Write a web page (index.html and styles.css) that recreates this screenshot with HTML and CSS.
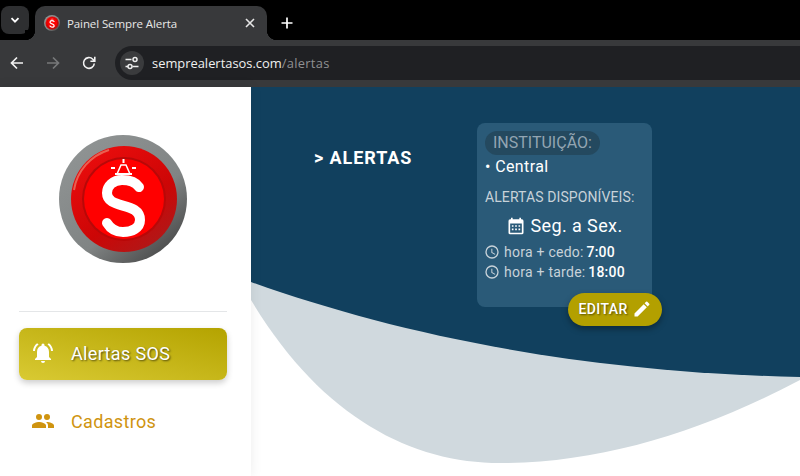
FILE: index.html
```html
<!DOCTYPE html>
<html lang="pt-BR">
<head>
    <meta charset="UTF-8" />
    <title>Painel Sempre Alerta</title>
    <link rel="stylesheet" href="styles.css">
</head>
<body>
<svg class="defs" width="0" height="0" aria-hidden="true">
  <defs>
    <linearGradient id="ringGrad" x1="0.15" y1="0.1" x2="0.85" y2="0.95">
      <stop offset="0" stop-color="#8f9393"/>
      <stop offset="0.6" stop-color="#808484"/>
      <stop offset="1" stop-color="#484848"/>
    </linearGradient>
    <linearGradient id="rimGrad" x1="0.2" y1="0.1" x2="0.8" y2="0.95">
      <stop offset="0" stop-color="#e80c0c"/>
      <stop offset="0.6" stop-color="#cc0606"/>
      <stop offset="1" stop-color="#b01818"/>
    </linearGradient>
    <symbol id="logo" viewBox="0 0 128 128">
      <circle cx="64" cy="64" r="64" fill="url(#ringGrad)"/>
      <circle cx="65" cy="64" r="53" fill="url(#rimGrad)"/>
      <path d="M15 55 A50 50 0 0 1 50 15" fill="none" stroke="#eb9a80" stroke-width="2" opacity=".6"/>
      <circle cx="65" cy="64" r="42" fill="#b80808"/>
      <circle cx="65" cy="64" r="40" fill="#ff0000"/>
      <path d="M80 52C76 46 70 45 63 45C54 45 48 51 48 58C48 75 81 66 81 85C81 93 73 97 64 97C56 97 51 93 48 88" fill="none" stroke="#fff" stroke-width="10" stroke-linecap="round"/>
      <path d="M58 39 L62 30 H67 L71 39 Z" fill="none" stroke="#fff" stroke-width="1.500"/>
      <path d="M56 39 H73" stroke="#fff" stroke-width="2"/>
      <path d="M64.500 24 V28 M52 33 H56 M73 33 H77" stroke="#fff" stroke-width="2"/>
    </symbol>
    <symbol id="clock" viewBox="0 0 24 24">
      <path fill="currentColor" d="M12 2a10 10 0 1 0 0 20 10 10 0 0 0 0-20zm0 18a8 8 0 1 1 0-16 8 8 0 0 1 0 16zm.5-13H11v6l5.2 3.2.8-1.2-4.5-2.7V7z"/>
    </symbol>
  </defs>
</svg>

<!-- barra do navegador -->
<div class="tabstrip">
  <div class="tab-menu">
    <svg width="12" height="12" viewBox="0 0 12 12"><path d="M2.500 4.200 6 7.700l3.500-3.500" fill="none" stroke="#fff" stroke-width="1.800"/></svg>
  </div>
  <div class="tab">
    <svg class="favicon" width="16" height="16"><use href="#logo"/></svg>
    <span class="tab-title">Painel Sempre Alerta</span>
    <svg width="10" height="10" viewBox="0 0 10 10"><path d="M1 1l8 8M9 1l-8 8" stroke="#e6e6e6" stroke-width="1.600"/></svg>
  </div>
  <svg class="new-tab" width="12" height="12" viewBox="0 0 12 12"><path d="M6 .5v11M.5 6h11" stroke="#fff" stroke-width="1.700"/></svg>
</div>
<div class="toolbar">
  <svg class="nav-icon" width="16" height="16" viewBox="0 0 16 16"><path d="M14 8H3M8 2.500 2.500 8 8 13.500" fill="none" stroke="#f2f2f2" stroke-width="1.700"/></svg>
  <svg class="nav-icon" width="16" height="16" viewBox="0 0 16 16"><path d="M2 8h11M8 2.500 13.500 8 8 13.500" fill="none" stroke="#77787a" stroke-width="1.700"/></svg>
  <svg class="nav-icon" width="16" height="16" viewBox="0 0 16 16"><path d="M13.300 8.500A5.400 5.400 0 1 1 11.800 4.200L13.600 6M13.800 1.800V6.200H9.400" fill="none" stroke="#f2f2f2" stroke-width="1.600"/></svg>
  <div class="omnibox">
    <span class="site-info">
      <svg width="16" height="16" viewBox="0 0 16 16"><path d="M1.500 4.500h6M1.500 11.500h2.500M8.500 11.500h6" stroke="#eee" stroke-width="1.500"/><circle cx="11" cy="4.500" r="2" fill="none" stroke="#eee" stroke-width="1.500"/><circle cx="6" cy="11.500" r="2" fill="none" stroke="#eee" stroke-width="1.500"/></svg>
    </span>
    <span class="url">semprealertasos.com<span class="url-path">/alertas</span></span>
  </div>
</div>

<div class="app">
  <aside class="sidebar">
    <div class="logo-box">
      <svg width="128" height="128"><use href="#logo"/></svg>
    </div>
    <hr class="divider">
    <nav class="menu">
      <a class="menu-item active" href="#">
        <svg width="24" height="24" viewBox="0 0 24 24"><path fill="#fff" d="M12 22a2 2 0 0 0 2-2h-4a2 2 0 0 0 2 2zm6-6v-5c0-3.100-1.600-5.600-4.500-6.300V4a1.500 1.500 0 0 0-3 0v.7C7.600 5.400 6 7.900 6 11v5l-2 2v1h16v-1l-2-2zM7.600 3.600 6.100 2.200A10.400 10.400 0 0 0 2 10h2a8.400 8.400 0 0 1 3.600-6.400zM20 10h2a10.500 10.500 0 0 0-4.100-7.800l-1.400 1.400A8.500 8.500 0 0 1 20 10z"/></svg>
        <span>Alertas SOS</span>
      </a>
      <a class="menu-item" href="#">
        <svg width="24" height="24" viewBox="0 0 24 24"><path fill="#cf9410" d="M16 11a3 3 0 1 0 0-6 3 3 0 0 0 0 6zm-8 0a3 3 0 1 0 0-6 3 3 0 0 0 0 6zm0 2c-2.300 0-7 1.200-7 3.500V19h14v-2.500C15 14.200 10.300 13 8 13zm8 0h-1c1.200.8 2 2 2 3.500V19h6v-2.500c0-2.300-4.700-3.500-7-3.500z"/></svg>
        <span>Cadastros</span>
      </a>
    </nav>
  </aside>

  <main class="content">
    <svg class="waves" width="549" height="389" viewBox="0 0 549 389">
      <path fill="#d0d9de" d="M0 190V213C70 330 160 376 249 376C350 376 450 345 549 293V190Z"/>
      <path fill="#11405e" d="M0 0H549V290C320 285 140 245 0 195Z"/>
    </svg>
    <h2 class="page-title">&gt; ALERTAS</h2>
    <section class="card">
      <span class="pill">INSTITUIÇÃO:</span>
      <p class="inst-name">• Central</p>
      <p class="card-label">ALERTAS DISPONÍVEIS:</p>
      <p class="days">
        <svg width="20" height="20" viewBox="0 0 24 24"><path fill="#fff" d="M19 4h-1V2h-2v2H8V2H6v2H5a2 2 0 0 0-2 2v14a2 2 0 0 0 2 2h14a2 2 0 0 0 2-2V6a2 2 0 0 0-2-2zm0 16H5V9h14v11zM7 11h2v2H7zm4 0h2v2h-2zm4 0h2v2h-2zm-8 4h2v2H7zm4 0h2v2h-2zm4 0h2v2h-2z"/></svg>
        Seg. a Sex.
      </p>
      <p class="hour"><svg width="16" height="16"><use href="#clock"/></svg>hora + cedo: <b>7:00</b></p>
      <p class="hour"><svg width="16" height="16"><use href="#clock"/></svg>hora + tarde: <b>18:00</b></p>
      <button class="edit-btn" type="button">
        EDITAR
        <svg width="20" height="20" viewBox="0 0 24 24"><path fill="#fff" d="M3 17.250V21h3.750L17.800 9.940l-3.750-3.750L3 17.250zM20.700 7.040a1 1 0 0 0 0-1.410l-2.340-2.340a1 1 0 0 0-1.410 0l-1.830 1.830 3.750 3.750 1.830-1.830z"/></svg>
      </button>
    </section>
  </main>
</div>
</body>
</html>
```

FILE: styles.css
```css
* {
    box-sizing: border-box;
}
html, body {
    margin: 0;
    height: 100%;
    overflow: hidden;
}
body {
    display: flex;
    flex-direction: column;
    background-color: #fff;
    font-family: Roboto, "Liberation Sans", sans-serif;
}
p {
    margin: 0;
}
.defs {
    position: absolute;
}

/* navegador */
.tabstrip {
    height: 40px;
    flex: none;
    display: flex;
    align-items: flex-end;
    background-color: #000;
    padding-left: 1px;
}
.tab-menu {
    width: 28px;
    height: 28px;
    margin-bottom: 6px;
    display: flex;
    align-items: center;
    justify-content: center;
    background-color: #2e2f31;
    border-radius: 8px;
}
.tab {
    position: relative;
    width: 232px;
    height: 34px;
    margin-left: 6px;
    padding: 0 12px 0 9px;
    display: flex;
    align-items: center;
    background-color: #38393b;
    border-radius: 10px 10px 0 0;
}
.tab::before, .tab::after {
    content: "";
    position: absolute;
    bottom: 0;
    width: 10px;
    height: 10px;
}
.tab::before {
    left: -10px;
    background: radial-gradient(circle at 0 0, #000 10px, #38393b 10.500px);
}
.tab::after {
    right: -10px;
    background: radial-gradient(circle at 100% 0, #000 10px, #38393b 10.500px);
}
.favicon {
    flex: none;
}
.tab-title {
    flex: 1;
    margin-left: 7px;
    font-family: "Open Sans", sans-serif;
    font-size: 11.500px;
    letter-spacing: -0.1px;
    color: #e8e8e8;
}
.new-tab {
    margin: 0 0 11px 14px;
}
.toolbar {
    height: 47px;
    flex: none;
    display: flex;
    align-items: center;
    gap: 20px;
    padding: 0 0 1px 9px;
    background-color: #38393b;
}
.omnibox {
    flex: 1;
    height: 34px;
    margin-left: -2px;
    margin-right: -20px;
    padding-left: 5px;
    display: flex;
    align-items: center;
    background-color: #1f2023;
    border-radius: 17px;
}
.site-info {
    width: 24px;
    height: 24px;
    display: flex;
    align-items: center;
    justify-content: center;
    background-color: #3a3b3d;
    border-radius: 50%;
}
.url {
    margin-left: 8px;
    font-family: "Open Sans", sans-serif;
    font-size: 12.900px;
    color: #f0f0f0;
}
.url-path {
    color: #8f9092;
    letter-spacing: 0.3px;
}

/* pagina */
.app {
    flex: 1;
    display: flex;
    min-height: 0;
}
.sidebar {
    position: relative;
    z-index: 2;
    width: 251px;
    flex: none;
    padding: 0 24px 0 19px;
    background-color: #fff;
    box-shadow: 0 0 12px rgba(0, 0, 0, 0.08);
}
.logo-box {
    height: 224px;
    padding: 48px 0 0 40px;
}
.divider {
    margin: 0;
    border: none;
    border-top: 1px solid #e4e6e8;
}
.menu {
    display: flex;
    flex-direction: column;
    gap: 16px;
    padding-top: 16px;
}
.menu-item {
    height: 52px;
    display: flex;
    align-items: center;
    gap: 16px;
    padding: 0 0 2px 12px;
    border-radius: 8px;
    font-size: 18px;
    letter-spacing: 0.35px;
    color: #cf9410;
    text-decoration: none;
}
.menu-item.active {
    color: #fff;
    background: linear-gradient(to top right, #d9ca33, #b4a300);
    box-shadow: 0 3px 6px rgba(0, 0, 0, 0.2);
    text-shadow: 1px 1px 2px rgba(0, 0, 0, 0.6);
}
.content {
    position: relative;
    flex: 1;
    display: flex;
    align-items: flex-start;
    overflow: hidden;
    padding: 36px 0 0 63px;
}
.waves {
    position: absolute;
    left: 0;
    top: 0;
}
.page-title {
    position: relative;
    margin: 24px 0 0;
    width: 163px;
    font-size: 18px;
    letter-spacing: 0.9px;
    font-weight: 700;
    color: #fff;
}
.card {
    position: relative;
    width: 175px;
    height: 184px;
    padding: 8px;
    background-color: #2a5a78;
    border-radius: 8px;
    color: #c8d2d9;
}
.pill {
    display: inline-block;
    height: 24px;
    line-height: 24px;
    padding: 0 8px;
    background-color: #24495f;
    border-radius: 12px;
    font-size: 16px;
    color: #93a5b2;
}
.inst-name {
    margin-top: 1px;
    font-size: 16px;
    line-height: 22px;
    letter-spacing: 0.4px;
    color: #fff;
}
.card-label {
    margin-top: 10px;
    font-size: 14px;
    letter-spacing: 0.1px;
    line-height: 18px;
}
.days {
    margin-top: 8px;
    display: flex;
    align-items: center;
    justify-content: center;
    gap: 4px;
    font-size: 18px;
    letter-spacing: 0.4px;
    line-height: 24px;
    color: #fff;
}
.hour {
    display: flex;
    align-items: center;
    gap: 4px;
    margin-left: -1px;
    font-size: 14px;
    letter-spacing: 0.25px;
    line-height: 20px;
    white-space: pre;
}
.days + .hour {
    margin-top: 4px;
}
.hour b {
    font-weight: 500;
    color: #fff;
    margin-left: -5px;
}
.edit-btn {
    position: absolute;
    left: 91px;
    top: 170px;
    width: 94px;
    height: 33px;
    display: flex;
    align-items: center;
    justify-content: center;
    gap: 4px;
    padding: 0 0 1px;
    border: none;
    border-radius: 17px;
    background-color: #b3a000;
    box-shadow: 0 3px 6px rgba(0, 0, 0, 0.35);
    font-family: inherit;
    font-size: 14px;
    letter-spacing: 0.4px;
    font-weight: 500;
    color: #fff;
    text-shadow: 1px 1px 2px rgba(0, 0, 0, 0.5);
}
```
